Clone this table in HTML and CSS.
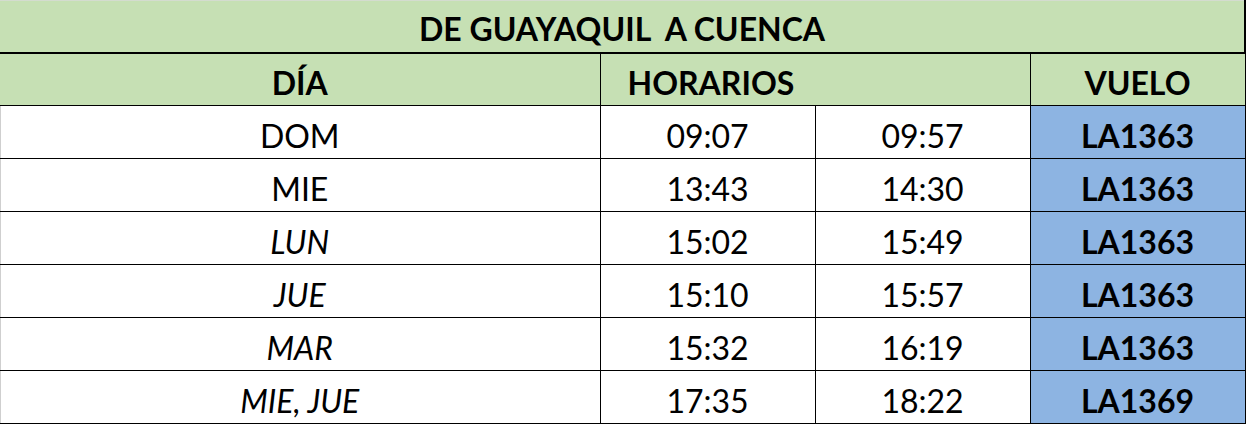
FILE: index.html
```html
<!DOCTYPE html>
<html lang="es">
<head>
<meta charset="utf-8">
<title>De Guayaquil a Cuenca</title>
<link rel="stylesheet" href="styles.css">
</head>
<body>
<table class="sched">
  <colgroup>
    <col class="c-dia">
    <col class="c-h">
    <col class="c-h">
    <col class="c-v">
  </colgroup>
  <tr class="title-row"><td colspan="4" class="title">DE GUAYAQUIL&nbsp; A CUENCA</td></tr>
  <tr class="head-row">
    <td class="head">DÍA</td>
    <td class="head head-left" colspan="2">HORARIOS</td>
    <td class="head">VUELO</td>
  </tr>
  <tr class="row"><td class="day">DOM</td><td>09:07</td><td>09:57</td><td class="flight">LA1363</td></tr>
  <tr class="row"><td class="day">MIE</td><td>13:43</td><td>14:30</td><td class="flight">LA1363</td></tr>
  <tr class="row"><td class="day it">LUN</td><td>15:02</td><td>15:49</td><td class="flight">LA1363</td></tr>
  <tr class="row"><td class="day it">JUE</td><td>15:10</td><td>15:57</td><td class="flight">LA1363</td></tr>
  <tr class="row"><td class="day it">MAR</td><td>15:32</td><td>16:19</td><td class="flight">LA1363</td></tr>
  <tr class="row"><td class="day it">MIE, JUE</td><td>17:35</td><td>18:22</td><td class="flight">LA1369</td></tr>
</table>
</body>
</html>
```

FILE: styles.css
```css
html, body {
  margin: 0;
  padding: 0;
  background: #ffffff;
}
body {
  font-family: "Lato", "Liberation Sans", sans-serif;
  color: #000;
}
.sched {
  border-collapse: collapse;
  table-layout: fixed;
  width: 1245px;
  border-top: 1px solid #d4dccf;
}
.c-dia { width: 600px; }
.c-h { width: 215px; }
.c-v { width: 215px; }
.sched td {
  font-size: 32px;
  line-height: 32px;
  text-align: center;
  vertical-align: top;
  padding: 0;
  box-sizing: border-box;
}
.title-row td {
  height: 52px;
  background: #c6e0b4;
  font-weight: 700;
  padding-top: 12px;
  border-right: 2px solid #000;
  border-bottom: 2px solid #000;
}
.head-row td {
  height: 53px;
  background: #c6e0b4;
  font-weight: 700;
  padding-top: 13px;
  border: 1px solid #000;
  border-left: none;
}
.head-row td.head-left {
  text-align: left;
  padding-left: 27px;
}
.row td {
  height: 53px;
  padding-top: 14px;
  border-right: 1px solid #000;
  border-bottom: 1px solid #000;
}
.row td.day {
  box-shadow: inset 1px 0 0 #cfcfcf;
}
.row td.flight {
  background: #8db4e2;
  font-weight: 700;
}
.it { font-style: italic; }
```
